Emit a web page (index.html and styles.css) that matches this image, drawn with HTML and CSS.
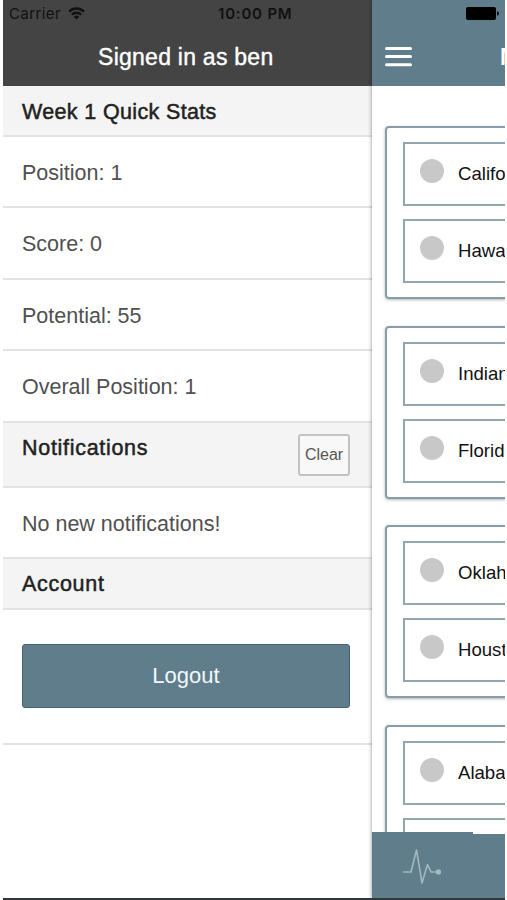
FILE: index.html
```html
<!DOCTYPE html>
<html lang="en">

<head>
   <meta charset="UTF-8">
   <meta name="viewport" content="width=device-width, initial-scale=1.0">
   <title>Pick'em</title>
   <link rel="stylesheet" href="styles.css">
</head>

<body>
   <div class="app">
      <div class="status-bar">
         <span class="carrier">Carrier</span>
         <svg class="wifi" width="17" height="13" viewBox="0 0 17 13" fill="none" stroke="#111" stroke-width="2.3">
            <path d="M1 4.6a10.6 10.6 0 0 1 15 0"/>
            <path d="M3.8 7.7a6.7 6.7 0 0 1 9.4 0"/>
            <path d="M8.5 12.6l-2.7-2.8a3.9 3.9 0 0 1 5.400 0z" fill="#111" stroke="none"/>
         </svg>
         <span class="clock">10:00 PM</span>
         <svg class="battery" width="33" height="13" viewBox="0 0 33 13">
            <rect x="0" y="0" width="30" height="13" rx="2" fill="#000"/>
            <path d="M31 4.300c2.600.6 2.600 3.800 0 4.400z" fill="#000"/>
         </svg>
      </div>

      <aside class="menu">
         <header class="menu-header">Signed in as ben</header>
         <h2 class="divider">Week 1 Quick Stats</h2>
         <div class="item">Position: 1</div>
         <div class="item">Score: 0</div>
         <div class="item">Potential: 55</div>
         <div class="item">Overall Position: 1</div>
         <h2 class="divider divider-tall"><span class="wide">Notifications</span> <button class="clear-button">Clear</button></h2>
         <div class="item">No new notifications!</div>
         <h2 class="divider"><span class="wide">Account</span></h2>
         <div class="logout">
            <button class="logout-button">Logout</button>
         </div>
      </aside>

      <main class="content">
         <header class="content-header">
            <svg class="menu-icon" width="27" height="22" viewBox="0 0 27 22" stroke="#fff" stroke-width="3" stroke-linecap="round">
               <path d="M1.500 2.600h24M1.500 10.600h24M1.500 18.700h24"/>
            </svg>
            <span class="title">My Picks</span>
         </header>
         <div class="games">
            <div class="game">
               <div class="team"><i class="radio"></i><span>California</span></div>
               <div class="team"><i class="radio"></i><span>Hawaii</span></div>
            </div>
            <div class="game">
               <div class="team"><i class="radio"></i><span>Indiana</span></div>
               <div class="team"><i class="radio"></i><span>Florida</span></div>
            </div>
            <div class="game">
               <div class="team"><i class="radio"></i><span>Oklahoma</span></div>
               <div class="team"><i class="radio"></i><span>Houston</span></div>
            </div>
            <div class="game">
               <div class="team"><i class="radio"></i><span>Alabama</span></div>
               <div class="team"></div>
            </div>
         </div>
         <nav class="tabs">
            <svg width="40" height="36" viewBox="0 0 40 36" fill="none" stroke="#a0b8c2" stroke-width="1.600" stroke-linejoin="round">
               <path d="M0 24h8l5.500-22 5.500 33 5.500-18.500 3.500 7.500h7"/>
               <circle cx="35.500" cy="24" r="2.700" fill="#a0b8c2" stroke="none"/>
            </svg>
         </nav>
      </main>
   </div>
</body>

</html>
```
FILE: styles.css
```css
* {
   box-sizing: border-box;
}

body {
   margin: 0;
   background-color: #fff;
   font-family: "Liberation Sans", Arial, sans-serif;
}

.app {
   position: relative;
   display: flex;
   width: 502px;
   height: 900px;
   margin-left: 3px;
   overflow: hidden;
   border-bottom: 2px solid #33353c;
}

/* status bar lies over both headers */
.status-bar {
   position: absolute;
   top: 0;
   left: 0;
   z-index: 2;
   display: flex;
   align-items: center;
   width: 100%;
   height: 27px;
   padding: 0 6px;
   color: #111;
   font-family: Inter, sans-serif;
   font-size: 15px;
}

.carrier {
   width: 59px;
   letter-spacing: 0.4px;
}

.clock {
   margin-left: 133px;
   font-weight: 600;
   letter-spacing: 0.8px;
}

.battery {
   margin-left: auto;
}

.menu {
   flex: none;
   width: 368.5px;
   color: #505050;
   font-size: 21.5px;
}

.menu-header {
   height: 86px;
   padding: 28px 3px 0 0;
   background-color: #444;
   color: #fff;
   font-size: 23px;
   line-height: 58px;
   text-align: center;
   letter-spacing: 0.25px;
   -webkit-text-stroke: 0.4px #fff;
}

.divider {
   display: flex;
   justify-content: space-between;
   height: 51px;
   margin: 0;
   padding: 0 21.5px 0 19px;
   background-color: #f4f4f4;
   border-bottom: 2px solid #e3e3e3;
   color: #222;
   font-size: 21.5px;
   font-weight: normal;
   line-height: 52px;
   letter-spacing: 0.35px;
   -webkit-text-stroke: 0.5px #222;
}

.divider-tall {
   height: 65px;
}

.wide {
   letter-spacing: 0.7px;
   line-height: 50px;
}

.clear-button {
   width: 52px;
   height: 42px;
   margin-top: 11px;
   padding: 0;
   background-color: #f8f8f8;
   border: 2px solid #c2c2c2;
   border-radius: 3px;
   color: #555;
   font-family: inherit;
   font-size: 16px;
   -webkit-text-stroke: 0;
}

.item {
   height: 71.4px;
   padding-left: 19px;
   border-bottom: 2px solid #e3e3e3;
   line-height: 72px;
}

.logout {
   height: 135px;
   padding: 34px 21.5px 0 19px;
   border-bottom: 2px solid #e3e3e3;
}

.logout-button {
   width: 100%;
   height: 64px;
   padding: 0;
   background-color: #607d8b;
   border: 1px solid #46606c;
   border-radius: 3px;
   color: #f2f8fb;
   font-family: inherit;
   font-size: 22px;
}

.content {
   display: flex;
   flex: 1;
   flex-direction: column;
   min-width: 0;
   background-color: #fff;
   box-shadow: 0 0 4px rgba(0, 0, 0, 0.45);
   z-index: 1;
}

.content-header {
   display: flex;
   flex: none;
   align-items: center;
   justify-content: space-between;
   height: 86px;
   padding: 28px 0 0 13.5px;
   background-color: #607d8b;
   overflow: hidden;
}

.menu-icon {
   flex: none;
}

.title {
   flex: none;
   width: 5px;
   color: #fff;
   font-size: 23px;
   font-weight: bold;
   line-height: 56px;
   white-space: nowrap;
}

.games {
   flex: 1;
   min-height: 0;
   padding: 40px 0 0 13.5px;
   overflow: hidden;
}

.game {
   width: 300px;
   height: 173px;
   margin-bottom: 26.6px;
   padding: 14px 16px;
   border: 2px solid #879da9;
   border-radius: 4px;
   box-shadow: 0 1px 3px rgba(0, 0, 0, 0.3);
}

.team {
   display: flex;
   height: 64px;
   margin-bottom: 13px;
   padding-left: 14.5px;
   border: 2px solid #91a6b1;
   color: #111;
   font-size: 18.6px;
   line-height: 59px;
}

.radio {
   width: 24px;
   height: 24px;
   margin: 15px 14.5px 0 0;
   background-color: #c8c8c8;
   border-radius: 50%;
}

.tabs {
   position: relative;
   flex: none;
   height: 64px;
   padding: 14px 0 0 31px;
   background-color: #607d8b;
}

/* active tab marker */
.tabs::before {
   content: "";
   position: absolute;
   top: -2px;
   left: 0;
   width: 101px;
   height: 2px;
   background-color: #607d8b;
}
```
